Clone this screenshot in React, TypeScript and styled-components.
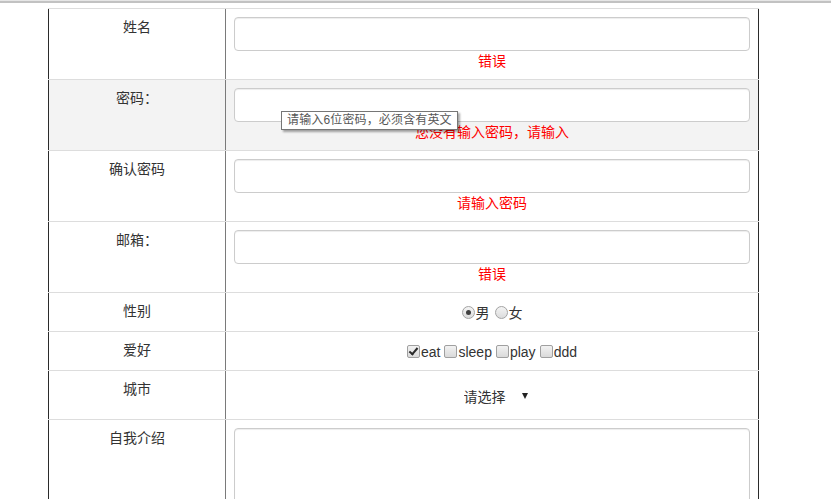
import React from "react";
import styled, { createGlobalStyle } from "styled-components";

const GlobalStyle = createGlobalStyle`
  html, body { margin: 0; padding: 0; background: #fff; }
  body {
    font-family: "Liberation Sans", "Noto Sans CJK SC", sans-serif;
    font-size: 14px;
    line-height: 20px;
    color: #333;
  }
  * { box-sizing: border-box; }
`;

const Page = styled.div`
  display: flex;
  flex-direction: column;
`;

const TopRule = styled.div`
  height: 3px;
  border-top: 1px solid #e6e6e6;
  border-bottom: 2px solid #c2c2c2;
  margin-bottom: 5px;
`;

const Form = styled.form`
  width: 711px;
  margin-left: 48px;
  display: flex;
  flex-direction: column;
`;

const Row = styled.div<{ $shaded?: boolean }>`
  display: grid;
  grid-template-columns: 178px 533px;
  border-top: 1px solid #ddd;
  background: ${(p) => (p.$shaded ? "#f3f3f3" : "#fff")};
`;

const LabelCell = styled.div`
  border-left: 1px solid #2b2b2b;
  border-right: 1px solid #7a7a7a;
  padding: 8px;
  text-align: center;
  color: #333;
`;

const FieldCell = styled.div`
  position: relative;
  border-right: 1px solid #2b2b2b;
  padding: 8px;
  display: flex;
  flex-direction: column;
  align-items: stretch;
`;

const TextInput = styled.input`
  display: block;
  width: 516px;
  height: 34px;
  margin: 0;
  padding: 6px 12px;
  border: 1px solid #ccc;
  border-radius: 4px;
  background: #fff;
  box-shadow: inset 0 1px 1px rgba(0, 0, 0, 0.075);
  font: inherit;
  outline: none;
`;

const TextArea = styled.textarea`
  display: block;
  width: 516px;
  height: 110px;
  margin: 0;
  padding: 6px 12px;
  border: 1px solid #ccc;
  border-radius: 4px;
  background: #fff;
  box-shadow: inset 0 1px 1px rgba(0, 0, 0, 0.075);
  font: inherit;
  resize: none;
  outline: none;
`;

const ErrorText = styled.div`
  height: 20px;
  line-height: 20px;
  text-align: center;
  color: #ff0000;
  font-size: 14px;
  white-space: nowrap;
`;

const ChoiceLine = styled.div<{ $gap: number }>`
  height: 22px;
  display: flex;
  justify-content: center;
  align-items: center;
  gap: ${(p) => p.$gap}px;
  padding-top: 1px;
`;

const Choice = styled.label`
  display: inline-flex;
  align-items: center;
  gap: 1px;
  color: #333;
  font-size: 14px;
`;

const Radio = styled.input.attrs({ type: "radio" })`
  appearance: none;
  -webkit-appearance: none;
  margin: 0;
  width: 13px;
  height: 13px;
  border-radius: 50%;
  border: 1px solid #a3a3a3;
  background: linear-gradient(#f4f4f4, #dcdcdc);
  display: inline-grid;
  place-items: center;
  &:checked::after {
    content: "";
    width: 5px;
    height: 5px;
    border-radius: 50%;
    background: #404040;
  }
`;

const Check = styled.input.attrs({ type: "checkbox" })`
  appearance: none;
  -webkit-appearance: none;
  margin: 0;
  width: 13px;
  height: 13px;
  border-radius: 2px;
  border: 1px solid #a0a0a0;
  background: linear-gradient(#f2f2f2, #dadada);
  display: inline-grid;
  place-items: center;
  &:checked::after {
    content: "";
    width: 7px;
    height: 3px;
    border-left: 2px solid #2a2a2a;
    border-bottom: 2px solid #2a2a2a;
    transform: translate(0, -1px) rotate(-50deg);
  }
`;

const SelectLine = styled.div`
  height: 32px;
  display: flex;
  justify-content: center;
  align-items: center;
  padding-top: 3px;
`;

const SelectBox = styled.div`
  display: inline-flex;
  align-items: center;
  gap: 16px;
  padding: 0 7px 0 14px;
`;

const Select = styled.select`
  appearance: none;
  -webkit-appearance: none;
  border: none;
  background: transparent;
  margin: 0;
  padding: 0;
  font: inherit;
  color: #333;
  outline: none;
`;

const Arrow = styled.span`
  display: inline-block;
  width: 0;
  height: 0;
  border-left: 3.5px solid transparent;
  border-right: 3.5px solid transparent;
  border-top: 6px solid #222;
  margin-top: -2px;
`;

const Tooltip = styled.div`
  position: absolute;
  left: 55px;
  top: 31px;
  z-index: 2;
  height: 19px;
  padding: 0 5px 0 5px;
  background: #fff;
  border: 1px solid #767676;
  box-shadow: 2px 2px 2px rgba(0, 0, 0, 0.35);
  color: #575757;
  font-size: 12px;
  letter-spacing: 0.15px;
  line-height: 17px;
  white-space: nowrap;
`;

type TextField = {
  label: string;
  type: string;
  error: string;
  shaded?: boolean;
  tip?: string;
};

const textFields: TextField[] = [
  { label: "姓名", type: "text", error: "错误" },
  {
    label: "密码：",
    type: "password",
    error: "您没有输入密码，请输入",
    shaded: true,
    tip: "请输入6位密码，必须含有英文",
  },
  { label: "确认密码", type: "password", error: "请输入密码" },
  { label: "邮箱：", type: "text", error: "错误" },
];

const hobbies = [
  { name: "eat", checked: true },
  { name: "sleep", checked: false },
  { name: "play", checked: false },
  { name: "ddd", checked: false },
];

export default function App() {
  return (
    <Page>
      <GlobalStyle />
      <TopRule />
      <Form onSubmit={(e) => e.preventDefault()}>
        {textFields.map((f) => (
          <Row key={f.label} $shaded={f.shaded}>
            <LabelCell>{f.label}</LabelCell>
            <FieldCell>
              <TextInput type={f.type} />
              <ErrorText>{f.error}</ErrorText>
              {f.tip && <Tooltip>{f.tip}</Tooltip>}
            </FieldCell>
          </Row>
        ))}
        <Row>
          <LabelCell>性别</LabelCell>
          <FieldCell>
            <ChoiceLine $gap={5}>
              <Choice>
                <Radio name="sex" defaultChecked />男
              </Choice>
              <Choice>
                <Radio name="sex" />女
              </Choice>
            </ChoiceLine>
          </FieldCell>
        </Row>
        <Row>
          <LabelCell>爱好</LabelCell>
          <FieldCell>
            <ChoiceLine $gap={4}>
              {hobbies.map((h) => (
                <Choice key={h.name}>
                  <Check defaultChecked={h.checked} />
                  {h.name}
                </Choice>
              ))}
            </ChoiceLine>
          </FieldCell>
        </Row>
        <Row>
          <LabelCell>城市</LabelCell>
          <FieldCell>
            <SelectLine>
              <SelectBox>
                <Select defaultValue="">
                  <option value="">请选择</option>
                  <option value="bj">北京</option>
                  <option value="sh">上海</option>
                </Select>
                <Arrow />
              </SelectBox>
            </SelectLine>
          </FieldCell>
        </Row>
        <Row>
          <LabelCell>自我介绍</LabelCell>
          <FieldCell>
            <TextArea />
          </FieldCell>
        </Row>
      </Form>
    </Page>
  );
}
